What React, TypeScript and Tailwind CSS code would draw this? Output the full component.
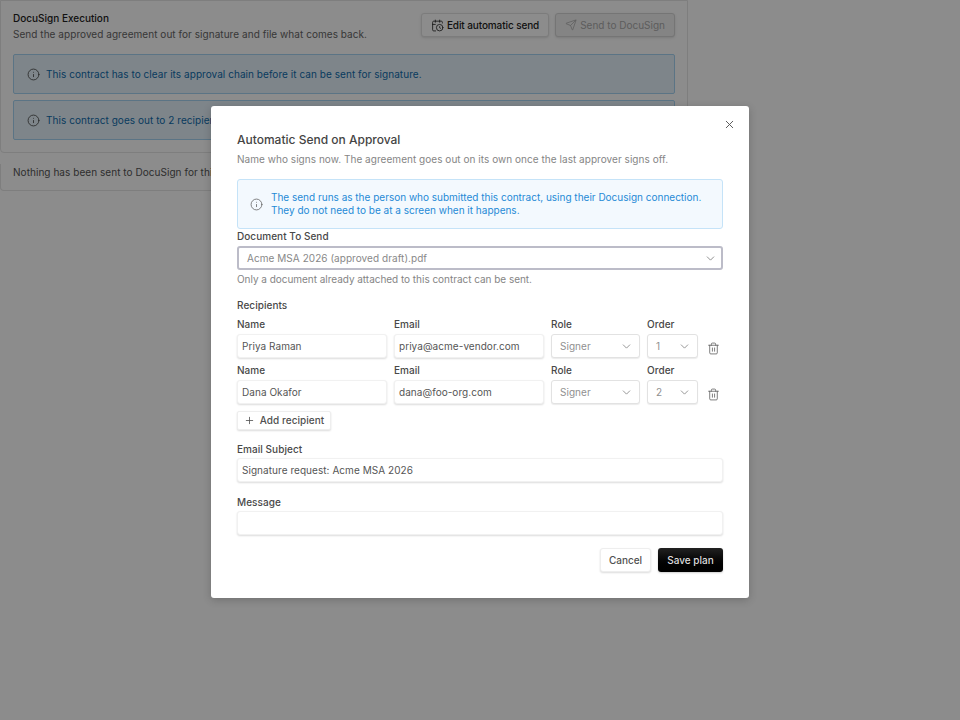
import { CalendarClock, ChevronDown, Info, Plus, Send, Trash2, X } from 'lucide-react';

const font = { fontFamily: 'Inter, sans-serif' };

const Label = ({ children }: { children: string }) => (
  <label className="block text-[10px] leading-[14px] font-medium text-[#484848] tracking-[0.05px]">{children}</label>
);

const TextBox = ({ value, className = '' }: { value?: string; className?: string }) => (
  <div className={`h-[24px] flex items-center px-[4px] bg-white border border-[#f1f1f1] rounded-[3px] shadow-[0_1px_2px_rgba(0,0,0,0.14)] text-[10px] text-[#555555] tracking-[0.05px] whitespace-nowrap ${className}`}>
    {value}
  </div>
);

const SelectBox = ({ value, className = '' }: { value: string; className?: string }) => (
  <div className={`h-[24px] flex items-center justify-between pl-[8px] pr-[6px] bg-white border border-[#e2e2e2] rounded-[3px] shadow-[0_1px_1px_rgba(0,0,0,0.08)] text-[10px] text-[#909090] tracking-[0.05px] ${className}`}>
    <span>{value}</span>
    <ChevronDown className="w-[13px] h-[13px] text-[#808080]" strokeWidth={1.5} />
  </div>
);

const RecipientRow = ({ name, email, role, order }: { name: string; email: string; role: string; order: string }) => (
  <div className="flex items-end">
    <div className="w-[150px] mr-[7px]">
      <Label>Name</Label>
      <TextBox value={name} className="mt-[3px]" />
    </div>
    <div className="w-[150px] mr-[7px]">
      <Label>Email</Label>
      <TextBox value={email} className="mt-[3px]" />
    </div>
    <div className="w-[89px] mr-[7px]">
      <Label>Role</Label>
      <SelectBox value={role} className="mt-[3px]" />
    </div>
    <div className="w-[51px] mr-[10px]">
      <Label>Order</Label>
      <SelectBox value={order} className="mt-[3px]" />
    </div>
    <Trash2 className="w-[13px] h-[13px] mb-[3px] -ml-[1px] text-[#606060]" strokeWidth={1.5} />
  </div>
);

const Background = () => (
  <div className="w-[688px]">
    <div className="h-[153px] bg-white border border-[#e5e5e5] rounded-b-[4px] px-[12px] pt-[10px]">
      <div className="flex justify-between">
        <div>
          <div className="text-[10px] leading-[14px] font-medium text-[#222222]">DocuSign Execution</div>
          <div className="mt-[2px] text-[10px] leading-[14px] text-[#666666] tracking-[0.05px]">
            Send the approved agreement out for signature and file what comes back.
          </div>
        </div>
        <div className="flex gap-[6px] mt-[2px]">
          <div className="h-[24px] px-[9px] flex items-center gap-[3px] border border-[#e2e2e2] bg-white rounded-[3px] shadow-sm text-[10px] font-medium text-[#222222] tracking-[-0.1px]">
            <CalendarClock className="w-[13px] h-[13px]" strokeWidth={1.5} />
            Edit automatic send
          </div>
          <div className="h-[24px] px-[9px] flex items-center gap-[3px] border border-[#d5d5d5] bg-[#f1f1f1] rounded-[3px] shadow-sm text-[10px] text-[#aaaaaa]">
            <Send className="w-[12px] h-[12px]" strokeWidth={1.5} />
            Send to DocuSign
          </div>
        </div>
      </div>
      <div className="mt-[13px] h-[40px] flex items-center gap-[6px] px-[13px] bg-[#e6f3fb] border border-[#a6d4f2] rounded-[2px] text-[10px] text-[#0f6cad] tracking-[0.05px]">
        <Info className="w-[13px] h-[13px] text-[#444444]" strokeWidth={1.5} />
        This contract has to clear its approval chain before it can be sent for signature.
      </div>
      <div className="mt-[6px] h-[40px] flex items-center gap-[6px] px-[13px] bg-[#e6f3fb] border border-[#a6d4f2] rounded-[2px] text-[10px] text-[#0f6cad] tracking-[0.05px]">
        <Info className="w-[13px] h-[13px] text-[#444444]" strokeWidth={1.5} />
        This contract goes out to 2 recipients once it is approved.
      </div>
    </div>
    <div className="mt-[11px] h-[27px] bg-white border border-[#e5e5e5] border-t-0 rounded-b-[4px] px-[12px] text-[10px] leading-[16px] text-[#555555] tracking-[0.05px]">
      Nothing has been sent to DocuSign for this contract yet.
    </div>
  </div>
);

export default function App() {
  return (
    <div className="h-[720px] relative overflow-hidden bg-white" style={font}>
      <Background />
      <div className="absolute inset-0 bg-black/45" />
      <div className="absolute left-[211px] top-[106px] w-[538px] h-[492px] bg-white rounded-[3px] shadow-[0_2px_8px_rgba(0,0,0,0.2)] px-[26px] pt-[26px]">
        <X className="absolute top-[12px] right-[13px] w-[13px] h-[13px] text-[#555555]" strokeWidth={1.75} />
        <h2 className="text-[12px] leading-[16px] font-medium text-[#444444]">Automatic Send on Approval</h2>
        <p className="mt-[4px] text-[10px] leading-[14px] text-[#858585] tracking-[0.04px]">
          Name who signs now. The agreement goes out on its own once the last approver signs off.
        </p>
        <div className="mt-[13px] h-[50px] flex items-center gap-[8px] pl-[12px] bg-[#f3f9fe] border border-[#c5e3f8] rounded-[3px]">
          <Info className="w-[13px] h-[13px] text-[#666666] shrink-0" strokeWidth={1.5} />
          <div className="text-[10px] leading-[13px] text-[#1f8ad6]">
            <div>The send runs as the person who submitted this contract, using their Docusign connection.</div>
            <div>They do not need to be at a screen when it happens.</div>
          </div>
        </div>
        <Label>Document To Send</Label>
        <div className="mt-[3px] h-[24px] flex items-center justify-between pl-[8px] pr-[4px] bg-white border-2 border-[#bcbcc8] rounded-[3px] text-[10px] text-[#888888] tracking-[0.05px]">
          <span>Acme MSA 2026 (approved draft).pdf</span>
          <ChevronDown className="w-[13px] h-[13px] text-[#777777]" strokeWidth={1.5} />
        </div>
        <p className="mt-[2px] text-[10px] leading-[14px] text-[#858585] tracking-[-0.03px]">
          Only a document already attached to this contract can be sent.
        </p>
        <div className="mt-[12px]">
          <Label>Recipients</Label>
        </div>
        <div className="mt-[5px] flex flex-col gap-[5px]">
          <RecipientRow name="Priya Raman" email="priya@acme-vendor.com" role="Signer" order="1" />
          <RecipientRow name="Dana Okafor" email="dana@foo-org.com" role="Signer" order="2" />
        </div>
        <button className="mt-[7px] h-[19px] w-[94px] flex items-center justify-center gap-[5px] bg-white border border-[#eeeeee] rounded-[2px] shadow-[0_1px_2px_rgba(0,0,0,0.14)] text-[10px] font-medium text-[#505050] tracking-[0.05px]">
          <Plus className="w-[11px] h-[11px]" strokeWidth={1.75} />
          Add recipient
        </button>
        <div className="mt-[12px]">
          <Label>Email Subject</Label>
        </div>
        <TextBox value="Signature request: Acme MSA 2026" className="mt-[2px]" />
        <div className="mt-[13px]">
          <Label>Message</Label>
        </div>
        <TextBox className="mt-[2px]" />
        <div className="mt-[13px] flex justify-end gap-[7px]">
          <button className="h-[24px] w-[51px] bg-white border border-[#eeeeee] rounded-[3px] shadow-[0_1px_2px_rgba(0,0,0,0.14)] text-[10px] font-medium text-[#505050]">Cancel</button>
          <button className="h-[24px] w-[65px] bg-gradient-to-b from-[#222222] to-[#000000] rounded-[3px] shadow-[0_1px_2px_rgba(0,0,0,0.2)] text-[10px] font-medium text-[#dddddd]">Save plan</button>
        </div>
      </div>
    </div>
  );
}
